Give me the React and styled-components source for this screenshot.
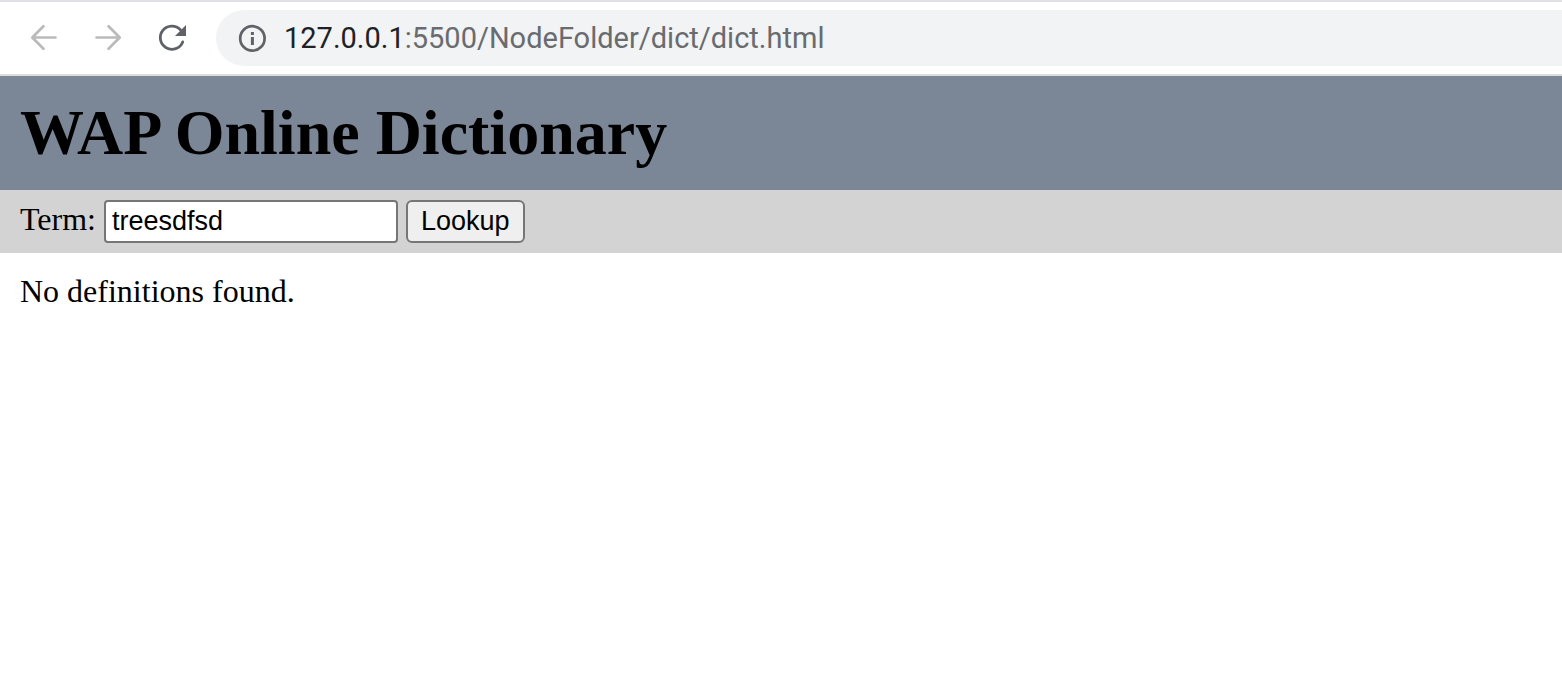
import React, { useState } from "react";
import styled, { createGlobalStyle } from "styled-components";

const GlobalStyle = createGlobalStyle`
  *, *::before, *::after { box-sizing: border-box; }
  body {
    margin: 0;
    background: #ffffff;
    color: #000000;
    font-family: "Liberation Serif", "Times New Roman", serif;
    font-size: 32px;
    line-height: 36px;
  }
`;

const Toolbar = styled.nav`
  display: flex;
  align-items: center;
  height: 76px;
  padding-left: 28px;
  border-top: 2px solid #e0e0e5;
  border-bottom: 2px solid #dcdedd;
`;

const NavButtons = styled.div`
  display: flex;
  gap: 32px;
  margin-right: 28px;
`;

const NavButton = styled.button`
  display: flex;
  padding: 0;
  border: 0;
  background: none;
  color: ${({ $muted }) => ($muted ? "#bababa" : "#5f6368")};
`;

const Icon = styled.svg`
  display: block;
  flex: none;
  width: 32px;
  height: 32px;
  fill: none;
  stroke: currentColor;
`;

const AddressBar = styled.div`
  display: flex;
  flex: 1;
  align-items: center;
  gap: 16px;
  height: 56px;
  padding-left: 20px;
  border-radius: 28px 0 0 28px;
  background: #f1f3f4;
  color: #5f6368;
`;

const Address = styled.span`
  color: #696b6e;
  font-family: Roboto, sans-serif;
  font-size: 29px;
  white-space: nowrap;
`;

const Host = styled.span`
  color: #202124;
`;

const Banner = styled.header`
  padding: 20px;
  background: #7b8797;
`;

const Title = styled.h1`
  margin: 0;
  font-size: 64px;
  line-height: 74px;
`;

const SearchForm = styled.form`
  display: flex;
  align-items: baseline;
  gap: 8px;
  padding: 10px 20px;
  background: #d3d3d3;
`;

const TermInput = styled.input`
  width: 294px;
  height: 43px;
  padding: 2px 6px;
  border: 2px solid #767676;
  border-radius: 4px;
  background: #ffffff;
  color: #000000;
  font-family: "Liberation Sans", Arial, sans-serif;
  font-size: 27px;
`;

const LookupButton = styled.button`
  height: 43px;
  padding: 0 13px;
  border: 2px solid #767676;
  border-radius: 6px;
  background: #efefef;
  color: #000000;
  font-family: "Liberation Sans", Arial, sans-serif;
  font-size: 27px;
`;

const Results = styled.main`
  padding: 20px;
`;

const Message = styled.p`
  margin: 0;
`;

function BackIcon() {
  return (
    <Icon viewBox="0 0 32 32" strokeWidth="2.7" strokeLinecap="round" strokeLinejoin="round" aria-hidden="true">
      <path d="M27.5 15.5H4.5M15.5 4.2 4.3 15.5 15.5 26.8" />
    </Icon>
  );
}

function ForwardIcon() {
  return (
    <Icon viewBox="0 0 32 32" strokeWidth="2.7" strokeLinecap="round" strokeLinejoin="round" aria-hidden="true">
      <path d="M4.5 15.5H27.5M16.5 4.2 27.7 15.5 16.5 26.8" />
    </Icon>
  );
}

function ReloadIcon() {
  return (
    <Icon viewBox="0 0 32 32" strokeWidth="2.8" strokeLinecap="round" aria-hidden="true">
      <path d="M26.7 19.9A11.6 11.6 0 1 1 24.4 7.8" />
      <path d="M30 3V14H19Z" fill="currentColor" stroke="none" />
    </Icon>
  );
}

function InfoIcon() {
  return (
    <Icon viewBox="0 0 32 32" aria-hidden="true">
      <circle cx="16.4" cy="16.4" r="12.2" strokeWidth="2.7" />
      <path d="M16.4 15V23M16.4 10V13" strokeWidth="3" />
    </Icon>
  );
}

export default function App() {
  const [term, setTerm] = useState("treesdfsd");

  return (
    <>
      <GlobalStyle />
      <Toolbar aria-label="Browser">
        <NavButtons>
          <NavButton type="button" $muted aria-label="Back"><BackIcon /></NavButton>
          <NavButton type="button" $muted aria-label="Forward"><ForwardIcon /></NavButton>
          <NavButton type="button" aria-label="Reload"><ReloadIcon /></NavButton>
        </NavButtons>
        <AddressBar>
          <InfoIcon />
          <Address><Host>127.0.0.1</Host>:5500/NodeFolder/dict/dict.html</Address>
        </AddressBar>
      </Toolbar>
      <Banner>
        <Title>WAP Online Dictionary</Title>
      </Banner>
      <SearchForm onSubmit={(event) => event.preventDefault()}>
        <label htmlFor="term">Term:</label>
        <TermInput id="term" type="text" value={term} onChange={(event) => setTerm(event.target.value)} />
        <LookupButton type="submit">Lookup</LookupButton>
      </SearchForm>
      <Results>
        <Message>No definitions found.</Message>
      </Results>
    </>
  );
}
